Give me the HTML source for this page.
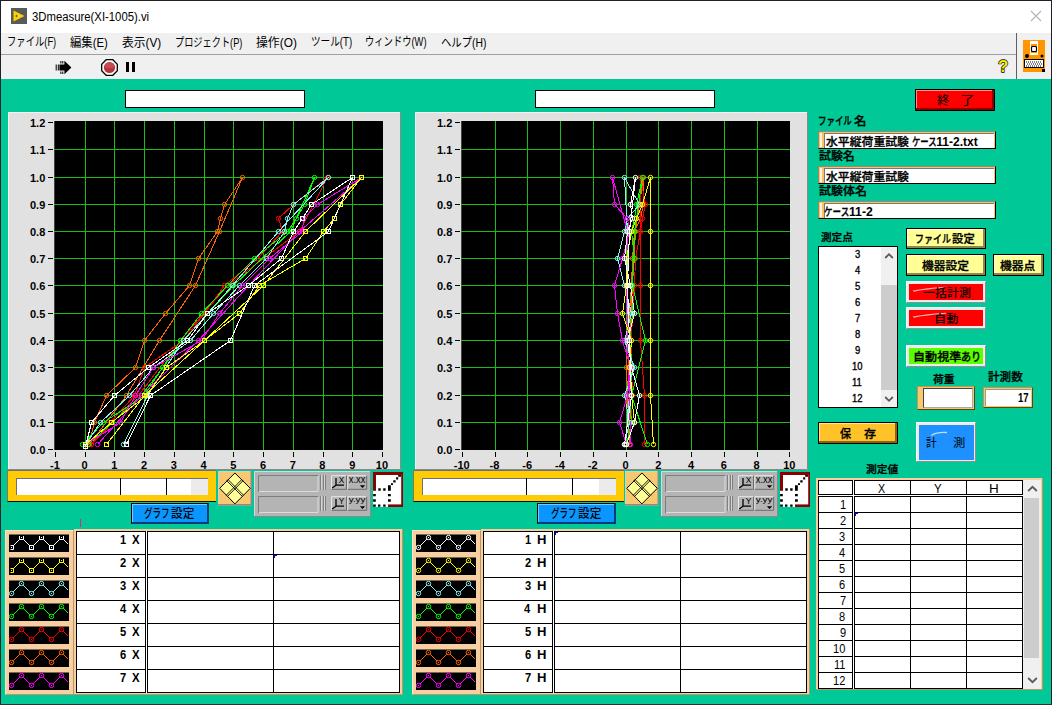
<!DOCTYPE html>
<html lang="ja"><head><meta charset="utf-8"><title>3Dmeasure(XI-1005).vi</title>
<style>
html,body{margin:0;padding:0}
body{width:1052px;height:705px;overflow:hidden;position:relative;background:#00c896;font-family:"Liberation Sans","Noto Sans CJK JP",sans-serif;color:#000}
body>*{position:absolute;box-sizing:border-box}
.t{white-space:nowrap;line-height:1}
svg text{font-family:"Liberation Sans","Noto Sans CJK JP",sans-serif}
.or{background:#f7c86e;border:1px solid;border-color:#c09848 #5a4410 #5a4410 #c09848}
.sv{background:#ececec;border:1px solid;border-color:#f8f8f8 #909090 #909090 #f8f8f8}
.pf{background:#f7cfa0;border-right:1px solid #b89868;border-bottom:1px solid #b89868}
.w{background:#fff}
.k{background:#000}
</style></head><body>

<div class="w" style="left:0;top:0;width:1052px;height:33px"></div>
<div style="left:0;top:33px;width:1052px;height:46px;background:#f0f0f0"></div>
<div style="left:0;top:54px;width:1017px;height:1px;background:#a0a0a0"></div>
<div style="left:1016px;top:33px;width:1px;height:46px;background:#606060"></div>
<svg style="left:11px;top:8px" width="16" height="16" viewBox="0 0 16 16"><rect width="16" height="16" fill="#5a5a5a"/><path d="M2.500 2.500L13.500 8L2.500 13.500Z" fill="#ffd200"/><path d="M5.500 6.800v2.400M4.300 8h2.400" stroke="#5a5a5a" stroke-width="0.900"/></svg>
<span class="t" style="left:31.9px;top:11.0px;font-size:12px;transform:scaleX(0.944);transform-origin:0 0;">3Dmeasure(XI-1005).vi</span>
<svg style="left:1030px;top:10px" width="12" height="12" viewBox="0 0 12 12"><path d="M1 1L11 11M11 1L1 11" stroke="#b4b4b4" stroke-width="1.100" fill="none"/></svg>
<span class="t" style="left:6.5px;top:36.0px;font-size:12px;transform:scaleX(0.777);transform-origin:0 0;">ファイル(F)</span>
<span class="t" style="left:70.2px;top:37.0px;font-size:12px;transform:scaleX(0.944);transform-origin:0 0;">編集(E)</span>
<span class="t" style="left:121.9px;top:37.0px;font-size:12px;transform:scaleX(0.981);transform-origin:0 0;">表示(V)</span>
<span class="t" style="left:174.5px;top:37.0px;font-size:12px;transform:scaleX(0.765);transform-origin:0 0;">プロジェクト(P)</span>
<span class="t" style="left:255.9px;top:37.0px;font-size:12px;transform:scaleX(0.988);transform-origin:0 0;">操作(O)</span>
<span class="t" style="left:310.8px;top:36.0px;font-size:12px;transform:scaleX(0.802);transform-origin:0 0;">ツール(T)</span>
<span class="t" style="left:365.1px;top:36.0px;font-size:12px;transform:scaleX(0.775);transform-origin:0 0;">ウィンドウ(W)</span>
<span class="t" style="left:441.0px;top:37.0px;font-size:12px;transform:scaleX(0.864);transform-origin:0 0;">ヘルプ(H)</span>
<svg style="left:55px;top:60px" width="17" height="15" viewBox="0 0 17 15"><path d="M4.400 4.500h5V0.800l7 6.700-7 6.700v-3.700h-5z" fill="#000"/><path d="M1.200 4.500v6M3.300 4.500v6M5.900 1v2.500M7.800 1v2.500M5.900 11.500v2.500M7.800 11.500v2.500" stroke="#000" stroke-width="1"/></svg>
<svg style="left:101px;top:59px" width="17" height="17" viewBox="0 0 17 17"><path d="M5.200 0.700h6.600l4.500 4.500v6.600l-4.500 4.500h-6.600l-4.500-4.500v-6.600z" fill="#fff" stroke="#000" stroke-width="1.300"/><circle cx="8.500" cy="8.500" r="5.600" fill="#b83238"/><ellipse cx="8.500" cy="6.500" rx="4.500" ry="3" fill="#cc5560" opacity="0.700"/></svg>
<div class="k" style="left:126px;top:62px;width:3px;height:10px"></div>
<div class="k" style="left:132px;top:62px;width:3px;height:10px"></div>
<svg style="left:994px;top:56px" width="18" height="20" viewBox="0 0 18 20"><text x="9.150" y="16" font-size="17" font-weight="bold" text-anchor="middle" fill="#f0f000" stroke="#000" stroke-width="1.300" paint-order="stroke" stroke-linejoin="round">?</text></svg>
<svg style="left:1023px;top:40px" width="22" height="32" viewBox="0 0 22 32"><rect width="22" height="32" fill="#ff9600"/><rect x="7" y="1" width="8" height="14" fill="#fff"/><rect x="8" y="4" width="6" height="9" fill="#ff9600"/><rect x="8.500" y="6.500" width="5" height="5" rx="1" fill="#fff" stroke="#000" stroke-width="1.200"/><circle cx="4" cy="16" r="2" fill="#000"/><circle cx="19" cy="16" r="1.500" fill="#000"/><rect x="1.500" y="19.500" width="19" height="8" fill="#fff" stroke="#000" stroke-width="1"/><path d="M3 22h16M3 26h16" stroke="#000" stroke-width="1" stroke-dasharray="1 1"/><path d="M4 24h15" stroke="#000" stroke-width="1" stroke-dasharray="1 1"/><rect x="19" y="29" width="3" height="3" fill="#000"/></svg>
<div style="left:0;top:0;width:1052px;height:1px;background:#20202c"></div>
<div style="left:0;top:0;width:1px;height:705px;background:#20202c"></div>
<div style="left:1051px;top:0;width:1px;height:705px;background:#20202c"></div>
<div style="left:0;top:703.500px;width:1052px;height:1.500px;background:#303038"></div>
<div class="w" style="left:125px;top:90px;width:180px;height:18px;border:1px solid #000"></div>
<div class="w" style="left:535px;top:90px;width:180px;height:18px;border:1px solid #000"></div>
<svg style="left:8px;top:112px" width="393" height="358" viewBox="0 0 393 358"><rect width="393" height="358" fill="#e1e1e1"/><path d="M0.500 358V0.500H393" fill="none" stroke="#f4f4f4" stroke-width="1"/><path d="M392.5 0V357.5H0" fill="none" stroke="#8a8a8a" stroke-width="1"/><rect x="46.3" y="9" width="328.7" height="329" fill="#000"/><path d="M77.5 9V338M106.5 9V338M136.5 9V338M166.5 9V338M196.5 9V338M225.5 9V338M255.5 9V338M285.5 9V338M315.5 9V338M344.5 9V338M46.3 310.5H375M46.3 283.5H375M46.3 255.5H375M46.3 228.5H375M46.3 201.5H375M46.3 173.5H375M46.3 146.5H375M46.3 119.5H375M46.3 92.5H375M46.3 65.5H375M46.3 37.5H375" stroke="#1cbc14" stroke-width="1" fill="none" shape-rendering="crispEdges"/><path d="M47.5 340v5M77.5 340v5M106.5 340v5M136.5 340v5M166.5 340v5M196.5 340v5M225.5 340v5M255.5 340v5M285.5 340v5M315.5 340v5M344.5 340v5M374.5 340v5M40.3 337.5h5M40.3 310.5h5M40.3 283.5h5M40.3 255.5h5M40.3 228.5h5M40.3 201.5h5M40.3 173.5h5M40.3 146.5h5M40.3 119.5h5M40.3 92.5h5M40.3 65.5h5M40.3 37.5h5M40.3 10.5h5" stroke="#000" stroke-width="1" fill="none" shape-rendering="crispEdges"/><g font-size="11" font-weight="bold" text-anchor="middle"><text x="46.9" y="356.6">-1</text><text x="76.6" y="356.6">0</text><text x="106.3" y="356.6">1</text><text x="136.1" y="356.6">2</text><text x="165.8" y="356.6">3</text><text x="195.5" y="356.6">4</text><text x="225.3" y="356.6">5</text><text x="255.0" y="356.6">6</text><text x="284.7" y="356.6">7</text><text x="314.4" y="356.6">8</text><text x="344.2" y="356.6">9</text><text x="373.9" y="356.6">10</text></g><g font-size="11" font-weight="bold" text-anchor="end"><text x="37.3" y="341.8">0.0</text><text x="37.3" y="314.8">0.1</text><text x="37.3" y="287.8">0.2</text><text x="37.3" y="259.8">0.3</text><text x="37.3" y="232.8">0.4</text><text x="37.3" y="205.8">0.5</text><text x="37.3" y="177.8">0.6</text><text x="37.3" y="150.8">0.7</text><text x="37.3" y="123.8">0.8</text><text x="37.3" y="96.8">0.9</text><text x="37.3" y="69.8">1.0</text><text x="37.3" y="41.8">1.1</text><text x="37.3" y="14.8">1.2</text></g><g fill="none" stroke="#ff6400" stroke-width="1"><polyline shape-rendering="crispEdges" points="80.5,332.5 86.5,310.5 98.5,283.5 127.5,255.5 136.5,228.5 157.5,201.5 181.5,173.5 190.5,146.5 209.5,119.5 212.5,106.5 216.5,92.5 234.5,65.5 211.5,119.5 187.5,173.5 151.5,228.5 118.5,283.5 81.5,332.5"/><circle cx="80.5" cy="332.5" r="2.200"/><circle cx="86.5" cy="310.5" r="2.200"/><circle cx="98.5" cy="283.5" r="2.200"/><circle cx="127.5" cy="255.5" r="2.200"/><circle cx="136.5" cy="228.5" r="2.200"/><circle cx="157.5" cy="201.5" r="2.200"/><circle cx="181.5" cy="173.5" r="2.200"/><circle cx="190.5" cy="146.5" r="2.200"/><circle cx="209.5" cy="119.5" r="2.200"/><circle cx="212.5" cy="106.5" r="2.200"/><circle cx="216.5" cy="92.5" r="2.200"/><circle cx="234.5" cy="65.5" r="2.200"/><circle cx="211.5" cy="119.5" r="2.200"/><circle cx="187.5" cy="173.5" r="2.200"/><circle cx="151.5" cy="228.5" r="2.200"/><circle cx="118.5" cy="283.5" r="2.200"/><circle cx="81.5" cy="332.5" r="2.200"/></g><g fill="none" stroke="#ff0000" stroke-width="1"><polyline shape-rendering="crispEdges" points="83.5,332.5 102.5,310.5 126.5,283.5 136.5,255.5 175.5,228.5 196.5,201.5 216.5,173.5 249.5,146.5 274.5,119.5 270.5,106.5 285.5,92.5 319.5,65.5 291.5,119.5 219.5,173.5 172.5,228.5 130.5,283.5 83.5,332.5"/><circle cx="83.5" cy="332.5" r="2.200"/><circle cx="102.5" cy="310.5" r="2.200"/><circle cx="126.5" cy="283.5" r="2.200"/><circle cx="136.5" cy="255.5" r="2.200"/><circle cx="175.5" cy="228.5" r="2.200"/><circle cx="196.5" cy="201.5" r="2.200"/><circle cx="216.5" cy="173.5" r="2.200"/><circle cx="249.5" cy="146.5" r="2.200"/><circle cx="274.5" cy="119.5" r="2.200"/><circle cx="270.5" cy="106.5" r="2.200"/><circle cx="285.5" cy="92.5" r="2.200"/><circle cx="319.5" cy="65.5" r="2.200"/><circle cx="291.5" cy="119.5" r="2.200"/><circle cx="219.5" cy="173.5" r="2.200"/><circle cx="172.5" cy="228.5" r="2.200"/><circle cx="130.5" cy="283.5" r="2.200"/><circle cx="83.5" cy="332.5" r="2.200"/></g><g fill="none" stroke="#00ff00" stroke-width="1"><polyline shape-rendering="crispEdges" points="74.5,332.5 95.5,310.5 136.5,283.5 154.5,255.5 172.5,228.5 193.5,201.5 219.5,173.5 246.5,146.5 279.5,119.5 288.5,106.5 296.5,92.5 306.5,65.5 282.5,119.5 225.5,173.5 175.5,228.5 133.5,283.5 80.5,332.5"/><circle cx="74.5" cy="332.5" r="2.200"/><circle cx="95.5" cy="310.5" r="2.200"/><circle cx="136.5" cy="283.5" r="2.200"/><circle cx="154.5" cy="255.5" r="2.200"/><circle cx="172.5" cy="228.5" r="2.200"/><circle cx="193.5" cy="201.5" r="2.200"/><circle cx="219.5" cy="173.5" r="2.200"/><circle cx="246.5" cy="146.5" r="2.200"/><circle cx="279.5" cy="119.5" r="2.200"/><circle cx="288.5" cy="106.5" r="2.200"/><circle cx="296.5" cy="92.5" r="2.200"/><circle cx="306.5" cy="65.5" r="2.200"/><circle cx="282.5" cy="119.5" r="2.200"/><circle cx="225.5" cy="173.5" r="2.200"/><circle cx="175.5" cy="228.5" r="2.200"/><circle cx="133.5" cy="283.5" r="2.200"/><circle cx="80.5" cy="332.5" r="2.200"/></g><g fill="none" stroke="#8cf0f0" stroke-width="1"><polyline shape-rendering="crispEdges" points="77.5,332.5 92.5,310.5 121.5,283.5 145.5,255.5 182.5,228.5 205.5,201.5 231.5,173.5 258.5,146.5 276.5,119.5 279.5,106.5 285.5,92.5 320.5,65.5 270.5,119.5 224.5,173.5 175.5,228.5 139.5,283.5 115.5,332.5"/><circle cx="77.5" cy="332.5" r="2.200"/><circle cx="92.5" cy="310.5" r="2.200"/><circle cx="121.5" cy="283.5" r="2.200"/><circle cx="145.5" cy="255.5" r="2.200"/><circle cx="182.5" cy="228.5" r="2.200"/><circle cx="205.5" cy="201.5" r="2.200"/><circle cx="231.5" cy="173.5" r="2.200"/><circle cx="258.5" cy="146.5" r="2.200"/><circle cx="276.5" cy="119.5" r="2.200"/><circle cx="279.5" cy="106.5" r="2.200"/><circle cx="285.5" cy="92.5" r="2.200"/><circle cx="320.5" cy="65.5" r="2.200"/><circle cx="270.5" cy="119.5" r="2.200"/><circle cx="224.5" cy="173.5" r="2.200"/><circle cx="175.5" cy="228.5" r="2.200"/><circle cx="139.5" cy="283.5" r="2.200"/><circle cx="115.5" cy="332.5" r="2.200"/></g><g fill="none" stroke="#ff00ff" stroke-width="1"><polyline shape-rendering="crispEdges" points="77.5,332.5 112.5,310.5 127.5,283.5 145.5,255.5 193.5,228.5 211.5,201.5 234.5,173.5 261.5,146.5 294.5,119.5 295.5,106.5 309.5,92.5 353.5,65.5 291.5,119.5 240.5,173.5 190.5,228.5 133.5,283.5 89.5,332.5"/><circle cx="77.5" cy="332.5" r="2.200"/><circle cx="112.5" cy="310.5" r="2.200"/><circle cx="127.5" cy="283.5" r="2.200"/><circle cx="145.5" cy="255.5" r="2.200"/><circle cx="193.5" cy="228.5" r="2.200"/><circle cx="211.5" cy="201.5" r="2.200"/><circle cx="234.5" cy="173.5" r="2.200"/><circle cx="261.5" cy="146.5" r="2.200"/><circle cx="294.5" cy="119.5" r="2.200"/><circle cx="295.5" cy="106.5" r="2.200"/><circle cx="309.5" cy="92.5" r="2.200"/><circle cx="353.5" cy="65.5" r="2.200"/><circle cx="291.5" cy="119.5" r="2.200"/><circle cx="240.5" cy="173.5" r="2.200"/><circle cx="190.5" cy="228.5" r="2.200"/><circle cx="133.5" cy="283.5" r="2.200"/><circle cx="89.5" cy="332.5" r="2.200"/></g><g fill="none" stroke="#ffff00" stroke-width="1"><polyline shape-rendering="crispEdges" points="77.5,332.5 103.5,310.5 138.5,283.5 158.5,255.5 196.5,228.5 231.5,201.5 251.5,173.5 297.5,146.5 315.5,119.5 326.5,106.5 332.5,92.5 353.5,65.5 297.5,119.5 255.5,173.5 196.5,228.5 136.5,283.5 98.5,332.5"/><rect x="75.5" y="330.5" width="4" height="4"/><rect x="101.5" y="308.5" width="4" height="4"/><rect x="136.5" y="281.5" width="4" height="4"/><rect x="156.5" y="253.5" width="4" height="4"/><rect x="194.5" y="226.5" width="4" height="4"/><rect x="229.5" y="199.5" width="4" height="4"/><rect x="249.5" y="171.5" width="4" height="4"/><rect x="295.5" y="144.5" width="4" height="4"/><rect x="313.5" y="117.5" width="4" height="4"/><rect x="324.5" y="104.5" width="4" height="4"/><rect x="330.5" y="90.5" width="4" height="4"/><rect x="351.5" y="63.5" width="4" height="4"/><rect x="295.5" y="117.5" width="4" height="4"/><rect x="253.5" y="171.5" width="4" height="4"/><rect x="194.5" y="226.5" width="4" height="4"/><rect x="134.5" y="281.5" width="4" height="4"/><rect x="96.5" y="330.5" width="4" height="4"/></g><g fill="none" stroke="#ffffff" stroke-width="1"><polyline shape-rendering="crispEdges" points="77.5,334.5 83.5,310.5 106.5,283.5 140.5,255.5 179.5,228.5 199.5,201.5 240.5,173.5 273.5,146.5 285.5,119.5 294.5,106.5 303.5,92.5 344.5,65.5 320.5,119.5 246.5,173.5 222.5,228.5 142.5,283.5 118.5,332.5"/><rect x="75.5" y="332.5" width="4" height="4"/><rect x="81.5" y="308.5" width="4" height="4"/><rect x="104.5" y="281.5" width="4" height="4"/><rect x="138.5" y="253.5" width="4" height="4"/><rect x="177.5" y="226.5" width="4" height="4"/><rect x="197.5" y="199.5" width="4" height="4"/><rect x="238.5" y="171.5" width="4" height="4"/><rect x="271.5" y="144.5" width="4" height="4"/><rect x="283.5" y="117.5" width="4" height="4"/><rect x="292.5" y="104.5" width="4" height="4"/><rect x="301.5" y="90.5" width="4" height="4"/><rect x="342.5" y="63.5" width="4" height="4"/><rect x="318.5" y="117.5" width="4" height="4"/><rect x="244.5" y="171.5" width="4" height="4"/><rect x="220.5" y="226.5" width="4" height="4"/><rect x="140.5" y="281.5" width="4" height="4"/><rect x="116.5" y="330.5" width="4" height="4"/></g></svg>
<svg style="left:415px;top:112px" width="393" height="358" viewBox="0 0 393 358"><rect width="393" height="358" fill="#e1e1e1"/><path d="M0.500 358V0.500H393" fill="none" stroke="#f4f4f4" stroke-width="1"/><path d="M392.5 0V357.5H0" fill="none" stroke="#8a8a8a" stroke-width="1"/><rect x="46.3" y="9" width="328.7" height="329" fill="#000"/><path d="M80.5 9V338M112.5 9V338M145.5 9V338M178.5 9V338M211.5 9V338M243.5 9V338M276.5 9V338M309.5 9V338M342.5 9V338M46.3 310.5H375M46.3 283.5H375M46.3 255.5H375M46.3 228.5H375M46.3 201.5H375M46.3 173.5H375M46.3 146.5H375M46.3 119.5H375M46.3 92.5H375M46.3 65.5H375M46.3 37.5H375" stroke="#1cbc14" stroke-width="1" fill="none" shape-rendering="crispEdges"/><path d="M47.5 340v5M80.5 340v5M112.5 340v5M145.5 340v5M178.5 340v5M211.5 340v5M243.5 340v5M276.5 340v5M309.5 340v5M342.5 340v5M374.5 340v5M40.3 337.5h5M40.3 310.5h5M40.3 283.5h5M40.3 255.5h5M40.3 228.5h5M40.3 201.5h5M40.3 173.5h5M40.3 146.5h5M40.3 119.5h5M40.3 92.5h5M40.3 65.5h5M40.3 37.5h5M40.3 10.5h5" stroke="#000" stroke-width="1" fill="none" shape-rendering="crispEdges"/><g font-size="11" font-weight="bold" text-anchor="middle"><text x="46.7" y="356.6">-10</text><text x="79.5" y="356.6">-8</text><text x="112.2" y="356.6">-6</text><text x="145.0" y="356.6">-4</text><text x="177.7" y="356.6">-2</text><text x="210.5" y="356.6">0</text><text x="243.3" y="356.6">2</text><text x="276.0" y="356.6">4</text><text x="308.8" y="356.6">6</text><text x="341.5" y="356.6">8</text><text x="374.3" y="356.6">10</text></g><g font-size="11" font-weight="bold" text-anchor="end"><text x="37.3" y="341.8">0.0</text><text x="37.3" y="314.8">0.1</text><text x="37.3" y="287.8">0.2</text><text x="37.3" y="259.8">0.3</text><text x="37.3" y="232.8">0.4</text><text x="37.3" y="205.8">0.5</text><text x="37.3" y="177.8">0.6</text><text x="37.3" y="150.8">0.7</text><text x="37.3" y="123.8">0.8</text><text x="37.3" y="96.8">0.9</text><text x="37.3" y="69.8">1.0</text><text x="37.3" y="41.8">1.1</text><text x="37.3" y="14.8">1.2</text></g><g fill="none" stroke="#ff6400" stroke-width="1"><polyline shape-rendering="crispEdges" points="211.5,332.5 216.5,310.5 212.5,283.5 211.5,255.5 212.5,228.5 214.5,201.5 216.5,173.5 217.5,146.5 219.5,119.5 225.5,106.5 228.5,92.5 228.5,65.5 220.5,119.5 217.5,173.5 214.5,228.5 212.5,283.5 214.5,332.5"/><circle cx="211.5" cy="332.5" r="2.200"/><circle cx="216.5" cy="310.5" r="2.200"/><circle cx="212.5" cy="283.5" r="2.200"/><circle cx="211.5" cy="255.5" r="2.200"/><circle cx="212.5" cy="228.5" r="2.200"/><circle cx="214.5" cy="201.5" r="2.200"/><circle cx="216.5" cy="173.5" r="2.200"/><circle cx="217.5" cy="146.5" r="2.200"/><circle cx="219.5" cy="119.5" r="2.200"/><circle cx="225.5" cy="106.5" r="2.200"/><circle cx="228.5" cy="92.5" r="2.200"/><circle cx="228.5" cy="65.5" r="2.200"/><circle cx="220.5" cy="119.5" r="2.200"/><circle cx="217.5" cy="173.5" r="2.200"/><circle cx="214.5" cy="228.5" r="2.200"/><circle cx="212.5" cy="283.5" r="2.200"/><circle cx="214.5" cy="332.5" r="2.200"/></g><g fill="none" stroke="#ff0000" stroke-width="1"><polyline shape-rendering="crispEdges" points="211.5,332.5 216.5,310.5 217.5,283.5 216.5,255.5 216.5,228.5 217.5,201.5 219.5,173.5 220.5,146.5 225.5,119.5 227.5,106.5 230.5,92.5 225.5,65.5 225.5,119.5 225.5,173.5 225.5,228.5 229.5,283.5 229.5,332.5"/><circle cx="211.5" cy="332.5" r="2.200"/><circle cx="216.5" cy="310.5" r="2.200"/><circle cx="217.5" cy="283.5" r="2.200"/><circle cx="216.5" cy="255.5" r="2.200"/><circle cx="216.5" cy="228.5" r="2.200"/><circle cx="217.5" cy="201.5" r="2.200"/><circle cx="219.5" cy="173.5" r="2.200"/><circle cx="220.5" cy="146.5" r="2.200"/><circle cx="225.5" cy="119.5" r="2.200"/><circle cx="227.5" cy="106.5" r="2.200"/><circle cx="230.5" cy="92.5" r="2.200"/><circle cx="225.5" cy="65.5" r="2.200"/><circle cx="225.5" cy="119.5" r="2.200"/><circle cx="225.5" cy="173.5" r="2.200"/><circle cx="225.5" cy="228.5" r="2.200"/><circle cx="229.5" cy="283.5" r="2.200"/><circle cx="229.5" cy="332.5" r="2.200"/></g><g fill="none" stroke="#00ff00" stroke-width="1"><polyline shape-rendering="crispEdges" points="211.5,332.5 216.5,310.5 214.5,283.5 217.5,255.5 214.5,228.5 217.5,201.5 216.5,173.5 219.5,146.5 216.5,119.5 219.5,106.5 221.5,92.5 227.5,65.5 219.5,119.5 217.5,173.5 230.5,228.5 216.5,283.5 232.5,332.5"/><circle cx="211.5" cy="332.5" r="2.200"/><circle cx="216.5" cy="310.5" r="2.200"/><circle cx="214.5" cy="283.5" r="2.200"/><circle cx="217.5" cy="255.5" r="2.200"/><circle cx="214.5" cy="228.5" r="2.200"/><circle cx="217.5" cy="201.5" r="2.200"/><circle cx="216.5" cy="173.5" r="2.200"/><circle cx="219.5" cy="146.5" r="2.200"/><circle cx="216.5" cy="119.5" r="2.200"/><circle cx="219.5" cy="106.5" r="2.200"/><circle cx="221.5" cy="92.5" r="2.200"/><circle cx="227.5" cy="65.5" r="2.200"/><circle cx="219.5" cy="119.5" r="2.200"/><circle cx="217.5" cy="173.5" r="2.200"/><circle cx="230.5" cy="228.5" r="2.200"/><circle cx="216.5" cy="283.5" r="2.200"/><circle cx="232.5" cy="332.5" r="2.200"/></g><g fill="none" stroke="#8cf0f0" stroke-width="1"><polyline shape-rendering="crispEdges" points="209.5,332.5 214.5,310.5 209.5,283.5 219.5,255.5 209.5,228.5 216.5,201.5 209.5,173.5 202.5,146.5 209.5,119.5 212.5,106.5 224.5,92.5 209.5,65.5 212.5,119.5 212.5,173.5 212.5,228.5 214.5,283.5 210.5,332.5"/><circle cx="209.5" cy="332.5" r="2.200"/><circle cx="214.5" cy="310.5" r="2.200"/><circle cx="209.5" cy="283.5" r="2.200"/><circle cx="219.5" cy="255.5" r="2.200"/><circle cx="209.5" cy="228.5" r="2.200"/><circle cx="216.5" cy="201.5" r="2.200"/><circle cx="209.5" cy="173.5" r="2.200"/><circle cx="202.5" cy="146.5" r="2.200"/><circle cx="209.5" cy="119.5" r="2.200"/><circle cx="212.5" cy="106.5" r="2.200"/><circle cx="224.5" cy="92.5" r="2.200"/><circle cx="209.5" cy="65.5" r="2.200"/><circle cx="212.5" cy="119.5" r="2.200"/><circle cx="212.5" cy="173.5" r="2.200"/><circle cx="212.5" cy="228.5" r="2.200"/><circle cx="214.5" cy="283.5" r="2.200"/><circle cx="210.5" cy="332.5" r="2.200"/></g><g fill="none" stroke="#ff00ff" stroke-width="1"><polyline shape-rendering="crispEdges" points="211.5,332.5 204.5,310.5 212.5,283.5 215.5,255.5 207.5,228.5 202.5,201.5 199.5,173.5 207.5,146.5 214.5,119.5 212.5,106.5 199.5,92.5 197.5,65.5 212.5,119.5 211.5,173.5 212.5,228.5 214.5,283.5 215.5,332.5"/><circle cx="211.5" cy="332.5" r="2.200"/><circle cx="204.5" cy="310.5" r="2.200"/><circle cx="212.5" cy="283.5" r="2.200"/><circle cx="215.5" cy="255.5" r="2.200"/><circle cx="207.5" cy="228.5" r="2.200"/><circle cx="202.5" cy="201.5" r="2.200"/><circle cx="199.5" cy="173.5" r="2.200"/><circle cx="207.5" cy="146.5" r="2.200"/><circle cx="214.5" cy="119.5" r="2.200"/><circle cx="212.5" cy="106.5" r="2.200"/><circle cx="199.5" cy="92.5" r="2.200"/><circle cx="197.5" cy="65.5" r="2.200"/><circle cx="212.5" cy="119.5" r="2.200"/><circle cx="211.5" cy="173.5" r="2.200"/><circle cx="212.5" cy="228.5" r="2.200"/><circle cx="214.5" cy="283.5" r="2.200"/><circle cx="215.5" cy="332.5" r="2.200"/></g><g fill="none" stroke="#ffff00" stroke-width="1"><polyline shape-rendering="crispEdges" points="211.5,332.5 219.5,310.5 216.5,283.5 214.5,255.5 216.5,228.5 207.5,201.5 211.5,173.5 211.5,146.5 216.5,119.5 221.5,106.5 227.5,92.5 235.5,65.5 235.5,119.5 235.5,173.5 235.5,228.5 235.5,283.5 238.5,332.5"/><circle cx="211.5" cy="332.5" r="2.200"/><circle cx="219.5" cy="310.5" r="2.200"/><circle cx="216.5" cy="283.5" r="2.200"/><circle cx="214.5" cy="255.5" r="2.200"/><circle cx="216.5" cy="228.5" r="2.200"/><circle cx="207.5" cy="201.5" r="2.200"/><circle cx="211.5" cy="173.5" r="2.200"/><circle cx="211.5" cy="146.5" r="2.200"/><circle cx="216.5" cy="119.5" r="2.200"/><circle cx="221.5" cy="106.5" r="2.200"/><circle cx="227.5" cy="92.5" r="2.200"/><circle cx="235.5" cy="65.5" r="2.200"/><circle cx="235.5" cy="119.5" r="2.200"/><circle cx="235.5" cy="173.5" r="2.200"/><circle cx="235.5" cy="228.5" r="2.200"/><circle cx="235.5" cy="283.5" r="2.200"/><circle cx="238.5" cy="332.5" r="2.200"/></g><g fill="none" stroke="#ffffff" stroke-width="1"><polyline shape-rendering="crispEdges" points="211.5,332.5 219.5,310.5 224.5,283.5 216.5,255.5 212.5,228.5 219.5,201.5 215.5,173.5 209.5,146.5 212.5,119.5 217.5,106.5 215.5,92.5 220.5,65.5 214.5,119.5 212.5,173.5 214.5,228.5 216.5,283.5 209.5,332.5"/><circle cx="211.5" cy="332.5" r="2.200"/><circle cx="219.5" cy="310.5" r="2.200"/><circle cx="224.5" cy="283.5" r="2.200"/><circle cx="216.5" cy="255.5" r="2.200"/><circle cx="212.5" cy="228.5" r="2.200"/><circle cx="219.5" cy="201.5" r="2.200"/><circle cx="215.5" cy="173.5" r="2.200"/><circle cx="209.5" cy="146.5" r="2.200"/><circle cx="212.5" cy="119.5" r="2.200"/><circle cx="217.5" cy="106.5" r="2.200"/><circle cx="215.5" cy="92.5" r="2.200"/><circle cx="220.5" cy="65.5" r="2.200"/><circle cx="214.5" cy="119.5" r="2.200"/><circle cx="212.5" cy="173.5" r="2.200"/><circle cx="214.5" cy="228.5" r="2.200"/><circle cx="216.5" cy="283.5" r="2.200"/><circle cx="209.5" cy="332.5" r="2.200"/></g></svg>
<div style="left:7.4px;top:470px;width:208.6px;height:32px;background:#ffcb05;border-top:1px solid #70706c;border-left:1px solid #8a7a40;border-bottom:1px solid #101010"></div>
<div class="w" style="left:16.3px;top:477.500px;width:191.6px;height:17.200px;border-top:1px solid #707070;border-left:1px solid #707070"></div>
<div style="left:191.0px;top:478.500px;width:16.9px;height:16.200px;background:#ebebeb"></div>
<div class="k" style="left:120px;top:478px;width:1px;height:17px"></div>
<div class="k" style="left:166px;top:478px;width:1px;height:17px"></div>
<div style="left:131px;top:503px;width:78px;height:21px;background:#0a96ff;border:1px solid #000;border-right:2px solid #003c78;border-bottom:2px solid #003c78;box-shadow:inset 1px 1px 0 #7fc8ff"></div>
<span class="t" style="left:144.2px;top:508.0px;font-size:12px;font-weight:500;transform:scaleX(0.711);transform-origin:0 0;">グラフ</span>
<span class="t" style="left:170.8px;top:508.0px;font-size:12px;font-weight:500;transform:scaleX(0.970);transform-origin:0 0;">設定</span>
<svg style="left:217.5px;top:471px" width="34" height="34.500" viewBox="0 0 34 34.500"><rect width="34" height="34.500" fill="#f8c870"/><path d="M0.500 34.500V0.500H34" stroke="#d8d0c0" stroke-width="1" fill="none"/><path d="M33.250 0V33.750H0" stroke="#8c8c8c" stroke-width="1.500" fill="none"/><path d="M16.900 2L32.300 17.300L16.900 32.900L1.700 17.300Z" fill="#ffff96" stroke="#000" stroke-width="1"/><path d="M8.700 9.600L24.300 25.400M9.900 8.400L25.500 24.200M25.100 9.600L9.500 25.400M23.900 8.400L8.300 24.200" stroke="#000" stroke-width="0.900" fill="none"/></svg>
<svg style="left:254px;top:471px" width="117" height="46" viewBox="0 0 117 46"><rect width="117" height="46" fill="#b4b4b4"/><path d="M0.500 46V0.500H117" stroke="#d8d8d8" fill="none"/><path d="M116.500 0V45.500H0" stroke="#8a8a8a" fill="none"/><path d="M4.500 21V4.5H64" stroke="#7c7c7c" fill="none"/><path d="M64 5V20.5H5" stroke="#dcdcdc" fill="none"/><path d="M66.500 4v15M69.500 4v15M71.500 4v15" stroke="#808080" fill="none"/><path d="M67.500 4v15M70.500 4v15" stroke="#d4d4d4" fill="none"/><path d="M77.5 18.3V4.7H92.5" stroke="#e8e8e8" fill="none"/><path d="M92.5 4.7V18.3H77.5" stroke="#6c6c6c" fill="none"/><path d="M93.8 18.3V4.7H112.69999999999999" stroke="#e8e8e8" fill="none"/><path d="M112.69999999999999 4.7V18.3H93.8" stroke="#6c6c6c" fill="none"/><path d="M82 7V14.2H90M82 14.2L78.200 17" stroke="#000" stroke-width="1.300" fill="none"/><text x="84.800" y="11.5" font-size="8.500" textLength="5.600" lengthAdjust="spacingAndGlyphs">X</text><text x="94.700" y="11.6" font-size="10" font-family="Liberation Mono,monospace" textLength="16.800" lengthAdjust="spacingAndGlyphs">x.xx</text><path d="M105.800 14.3h5.400l-2.700 2.700z" fill="#000"/><path d="M4.500 42V25.5H64" stroke="#7c7c7c" fill="none"/><path d="M64 26V41.5H5" stroke="#dcdcdc" fill="none"/><path d="M66.500 25v15M69.500 25v15M71.500 25v15" stroke="#808080" fill="none"/><path d="M67.500 25v15M70.500 25v15" stroke="#d4d4d4" fill="none"/><path d="M77.5 39.3V25.7H92.5" stroke="#e8e8e8" fill="none"/><path d="M92.5 25.7V39.3H77.5" stroke="#6c6c6c" fill="none"/><path d="M93.8 39.3V25.7H112.69999999999999" stroke="#e8e8e8" fill="none"/><path d="M112.69999999999999 25.7V39.3H93.8" stroke="#6c6c6c" fill="none"/><path d="M82 28V35.2H90M82 35.2L78.200 38" stroke="#000" stroke-width="1.300" fill="none"/><text x="84.800" y="32.5" font-size="8.500" textLength="5.600" lengthAdjust="spacingAndGlyphs">Y</text><text x="94.700" y="31.2" font-size="8" font-family="Liberation Mono,monospace" textLength="16.800" lengthAdjust="spacingAndGlyphs">y.yy</text><path d="M105.800 35.3h5.400l-2.700 2.700z" fill="#000"/></svg>
<svg style="left:373px;top:472px" width="30" height="35" viewBox="0 0 30 35"><rect width="30" height="35" fill="#8b0000"/><rect x="3" y="3" width="25.200" height="29.400" fill="#fff"/><rect x="0" y="18.800" width="15" height="16.200" fill="#fff"/><path d="M5.3 16.3h2.4v2.4h-2.4zM10.2 16.3h2.4v2.4h-2.4zM0.1 21.9h2.7v2.4h-2.7zM0.1 27.3h2.7v2.4h-2.7zM0.1 32.4h2.7v2.4h-2.7zM5.0 32.4h2.4v2.4h-2.4zM10.2 32.4h2.4v2.4h-2.4zM15.0 13.3h2.8v5.4h-2.8zM15.0 21.9h2.8v2.4h-2.8zM15.0 27.3h2.8v2.4h-2.8zM18.0 11.2h2v1.8h-2zM20.3 8.2h2.3v2.2h-2.3zM23.1 5.3h2.1v2.1h-2.1zM25.2 3.0h2.8v1.8h-2.8z" fill="#000"/></svg>
<div style="left:413.4px;top:470px;width:210.4px;height:32px;background:#ffcb05;border-top:1px solid #70706c;border-left:1px solid #8a7a40;border-bottom:1px solid #101010"></div>
<div class="w" style="left:422.3px;top:477.500px;width:193.5px;height:17.200px;border-top:1px solid #707070;border-left:1px solid #707070"></div>
<div style="left:598.8px;top:478.500px;width:17.0px;height:16.200px;background:#ebebeb"></div>
<div class="k" style="left:526px;top:478px;width:1px;height:17px"></div>
<div class="k" style="left:572px;top:478px;width:1px;height:17px"></div>
<div style="left:537px;top:503px;width:79px;height:21px;background:#0a96ff;border:1px solid #000;border-right:2px solid #003c78;border-bottom:2px solid #003c78;box-shadow:inset 1px 1px 0 #7fc8ff"></div>
<span class="t" style="left:551.0px;top:508.0px;font-size:12px;font-weight:500;transform:scaleX(0.711);transform-origin:0 0;">グラフ</span>
<span class="t" style="left:577.6px;top:508.0px;font-size:12px;font-weight:500;transform:scaleX(0.970);transform-origin:0 0;">設定</span>
<svg style="left:624.5px;top:471px" width="34" height="34.500" viewBox="0 0 34 34.500"><rect width="34" height="34.500" fill="#f8c870"/><path d="M0.500 34.500V0.500H34" stroke="#d8d0c0" stroke-width="1" fill="none"/><path d="M33.250 0V33.750H0" stroke="#8c8c8c" stroke-width="1.500" fill="none"/><path d="M16.900 2L32.300 17.300L16.900 32.900L1.700 17.300Z" fill="#ffff96" stroke="#000" stroke-width="1"/><path d="M8.700 9.600L24.300 25.400M9.900 8.400L25.500 24.200M25.100 9.600L9.500 25.400M23.900 8.400L8.300 24.200" stroke="#000" stroke-width="0.900" fill="none"/></svg>
<svg style="left:661px;top:471px" width="117" height="46" viewBox="0 0 117 46"><rect width="117" height="46" fill="#b4b4b4"/><path d="M0.500 46V0.500H117" stroke="#d8d8d8" fill="none"/><path d="M116.500 0V45.500H0" stroke="#8a8a8a" fill="none"/><path d="M4.500 21V4.5H64" stroke="#7c7c7c" fill="none"/><path d="M64 5V20.5H5" stroke="#dcdcdc" fill="none"/><path d="M66.500 4v15M69.500 4v15M71.500 4v15" stroke="#808080" fill="none"/><path d="M67.500 4v15M70.500 4v15" stroke="#d4d4d4" fill="none"/><path d="M77.5 18.3V4.7H92.5" stroke="#e8e8e8" fill="none"/><path d="M92.5 4.7V18.3H77.5" stroke="#6c6c6c" fill="none"/><path d="M93.8 18.3V4.7H112.69999999999999" stroke="#e8e8e8" fill="none"/><path d="M112.69999999999999 4.7V18.3H93.8" stroke="#6c6c6c" fill="none"/><path d="M82 7V14.2H90M82 14.2L78.200 17" stroke="#000" stroke-width="1.300" fill="none"/><text x="84.800" y="11.5" font-size="8.500" textLength="5.600" lengthAdjust="spacingAndGlyphs">X</text><text x="94.700" y="11.6" font-size="10" font-family="Liberation Mono,monospace" textLength="16.800" lengthAdjust="spacingAndGlyphs">x.xx</text><path d="M105.800 14.3h5.400l-2.700 2.700z" fill="#000"/><path d="M4.500 42V25.5H64" stroke="#7c7c7c" fill="none"/><path d="M64 26V41.5H5" stroke="#dcdcdc" fill="none"/><path d="M66.500 25v15M69.500 25v15M71.500 25v15" stroke="#808080" fill="none"/><path d="M67.500 25v15M70.500 25v15" stroke="#d4d4d4" fill="none"/><path d="M77.5 39.3V25.7H92.5" stroke="#e8e8e8" fill="none"/><path d="M92.5 25.7V39.3H77.5" stroke="#6c6c6c" fill="none"/><path d="M93.8 39.3V25.7H112.69999999999999" stroke="#e8e8e8" fill="none"/><path d="M112.69999999999999 25.7V39.3H93.8" stroke="#6c6c6c" fill="none"/><path d="M82 28V35.2H90M82 35.2L78.200 38" stroke="#000" stroke-width="1.300" fill="none"/><text x="84.800" y="32.5" font-size="8.500" textLength="5.600" lengthAdjust="spacingAndGlyphs">Y</text><text x="94.700" y="31.2" font-size="8" font-family="Liberation Mono,monospace" textLength="16.800" lengthAdjust="spacingAndGlyphs">y.yy</text><path d="M105.800 35.3h5.400l-2.700 2.700z" fill="#000"/></svg>
<svg style="left:780px;top:472px" width="30" height="35" viewBox="0 0 30 35"><rect width="30" height="35" fill="#8b0000"/><rect x="3" y="3" width="25.200" height="29.400" fill="#fff"/><rect x="0" y="18.800" width="15" height="16.200" fill="#fff"/><path d="M5.3 16.3h2.4v2.4h-2.4zM10.2 16.3h2.4v2.4h-2.4zM0.1 21.9h2.7v2.4h-2.7zM0.1 27.3h2.7v2.4h-2.7zM0.1 32.4h2.7v2.4h-2.7zM5.0 32.4h2.4v2.4h-2.4zM10.2 32.4h2.4v2.4h-2.4zM15.0 13.3h2.8v5.4h-2.8zM15.0 21.9h2.8v2.4h-2.8zM15.0 27.3h2.8v2.4h-2.8zM18.0 11.2h2v1.8h-2zM20.3 8.2h2.3v2.2h-2.3zM23.1 5.3h2.1v2.1h-2.1zM25.2 3.0h2.8v1.8h-2.8z" fill="#000"/></svg>
<div style="left:80px;top:519px;width:1px;height:8px;background:#e8246c"></div>
<div class="pf" style="left:5px;top:530px;width:69px;height:165px;border-top:1px solid #fbe4c4;border-left:1px solid #fbe4c4"></div>
<svg style="left:9px;top:534px" width="60" height="18" viewBox="0 0 60 18"><rect y="0.500" width="60" height="17.500" fill="#000"/><g fill="#000" stroke="#ffffff"><polyline fill="none" points="2.5,13.5 12.5,3.5 22.5,13.5 32.5,3.5 42.5,13.5 52.5,3.5 59,10"/><path d="M1.500 11.5H4.5V15.5H1.500"/><rect x="2.0" y="13.0" width="1" height="1" fill="#ffffff" stroke="none"/><path d="M10.5 2V5.5H14.5V2"/><rect x="12.0" y="3.0" width="1" height="1" fill="#ffffff" stroke="none"/><rect x="20.5" y="11.5" width="4" height="4"/><rect x="22.0" y="13.0" width="1" height="1" fill="#ffffff" stroke="none"/><path d="M30.5 2V5.5H34.5V2"/><rect x="32.0" y="3.0" width="1" height="1" fill="#ffffff" stroke="none"/><rect x="40.5" y="11.5" width="4" height="4"/><rect x="42.0" y="13.0" width="1" height="1" fill="#ffffff" stroke="none"/><path d="M50.5 2V5.5H54.5V2"/><rect x="52.0" y="3.0" width="1" height="1" fill="#ffffff" stroke="none"/></g></svg>
<svg style="left:9px;top:557px" width="60" height="18" viewBox="0 0 60 18"><rect y="0.500" width="60" height="17.500" fill="#000"/><g fill="#000" stroke="#ffff00"><polyline fill="none" points="2.5,13.5 12.5,3.5 22.5,13.5 32.5,3.5 42.5,13.5 52.5,3.5 59,10"/><path d="M1.500 11.5H4.5V15.5H1.500"/><rect x="2.0" y="13.0" width="1" height="1" fill="#ffff00" stroke="none"/><path d="M10.5 2V5.5H14.5V2"/><rect x="12.0" y="3.0" width="1" height="1" fill="#ffff00" stroke="none"/><rect x="20.5" y="11.5" width="4" height="4"/><rect x="22.0" y="13.0" width="1" height="1" fill="#ffff00" stroke="none"/><path d="M30.5 2V5.5H34.5V2"/><rect x="32.0" y="3.0" width="1" height="1" fill="#ffff00" stroke="none"/><rect x="40.5" y="11.5" width="4" height="4"/><rect x="42.0" y="13.0" width="1" height="1" fill="#ffff00" stroke="none"/><path d="M50.5 2V5.5H54.5V2"/><rect x="52.0" y="3.0" width="1" height="1" fill="#ffff00" stroke="none"/></g></svg>
<svg style="left:9px;top:580px" width="60" height="18" viewBox="0 0 60 18"><rect y="0.500" width="60" height="17.500" fill="#000"/><g fill="#000" stroke="#8cf0f0"><polyline fill="none" points="2.5,13.5 12.5,3.5 22.5,13.5 32.5,3.5 42.5,13.5 52.5,3.5 59,10"/><circle cx="2.5" cy="13.5" r="2.200"/><rect x="2.0" y="13.0" width="1" height="1" fill="#8cf0f0" stroke="none"/><circle cx="12.5" cy="3.5" r="2.200"/><rect x="12.0" y="3.0" width="1" height="1" fill="#8cf0f0" stroke="none"/><circle cx="22.5" cy="13.5" r="2.200"/><rect x="22.0" y="13.0" width="1" height="1" fill="#8cf0f0" stroke="none"/><circle cx="32.5" cy="3.5" r="2.200"/><rect x="32.0" y="3.0" width="1" height="1" fill="#8cf0f0" stroke="none"/><circle cx="42.5" cy="13.5" r="2.200"/><rect x="42.0" y="13.0" width="1" height="1" fill="#8cf0f0" stroke="none"/><circle cx="52.5" cy="3.5" r="2.200"/><rect x="52.0" y="3.0" width="1" height="1" fill="#8cf0f0" stroke="none"/></g></svg>
<svg style="left:9px;top:603px" width="60" height="18" viewBox="0 0 60 18"><rect y="0.500" width="60" height="17.500" fill="#000"/><g fill="#000" stroke="#00ff00"><polyline fill="none" points="2.5,13.5 12.5,3.5 22.5,13.5 32.5,3.5 42.5,13.5 52.5,3.5 59,10"/><circle cx="2.5" cy="13.5" r="2.200"/><rect x="2.0" y="13.0" width="1" height="1" fill="#00ff00" stroke="none"/><circle cx="12.5" cy="3.5" r="2.200"/><rect x="12.0" y="3.0" width="1" height="1" fill="#00ff00" stroke="none"/><circle cx="22.5" cy="13.5" r="2.200"/><rect x="22.0" y="13.0" width="1" height="1" fill="#00ff00" stroke="none"/><circle cx="32.5" cy="3.5" r="2.200"/><rect x="32.0" y="3.0" width="1" height="1" fill="#00ff00" stroke="none"/><circle cx="42.5" cy="13.5" r="2.200"/><rect x="42.0" y="13.0" width="1" height="1" fill="#00ff00" stroke="none"/><circle cx="52.5" cy="3.5" r="2.200"/><rect x="52.0" y="3.0" width="1" height="1" fill="#00ff00" stroke="none"/></g></svg>
<svg style="left:9px;top:626px" width="60" height="18" viewBox="0 0 60 18"><rect y="0.500" width="60" height="17.500" fill="#000"/><g fill="#000" stroke="#ff0000"><polyline fill="none" points="2.5,13.5 12.5,3.5 22.5,13.5 32.5,3.5 42.5,13.5 52.5,3.5 59,10"/><circle cx="2.5" cy="13.5" r="2.200"/><rect x="2.0" y="13.0" width="1" height="1" fill="#ff0000" stroke="none"/><circle cx="12.5" cy="3.5" r="2.200"/><rect x="12.0" y="3.0" width="1" height="1" fill="#ff0000" stroke="none"/><circle cx="22.5" cy="13.5" r="2.200"/><rect x="22.0" y="13.0" width="1" height="1" fill="#ff0000" stroke="none"/><circle cx="32.5" cy="3.5" r="2.200"/><rect x="32.0" y="3.0" width="1" height="1" fill="#ff0000" stroke="none"/><circle cx="42.5" cy="13.5" r="2.200"/><rect x="42.0" y="13.0" width="1" height="1" fill="#ff0000" stroke="none"/><circle cx="52.5" cy="3.5" r="2.200"/><rect x="52.0" y="3.0" width="1" height="1" fill="#ff0000" stroke="none"/></g></svg>
<svg style="left:9px;top:649px" width="60" height="18" viewBox="0 0 60 18"><rect y="0.500" width="60" height="17.500" fill="#000"/><g fill="#000" stroke="#ff6400"><polyline fill="none" points="2.5,13.5 12.5,3.5 22.5,13.5 32.5,3.5 42.5,13.5 52.5,3.5 59,10"/><circle cx="2.5" cy="13.5" r="2.200"/><rect x="2.0" y="13.0" width="1" height="1" fill="#ff6400" stroke="none"/><circle cx="12.5" cy="3.5" r="2.200"/><rect x="12.0" y="3.0" width="1" height="1" fill="#ff6400" stroke="none"/><circle cx="22.5" cy="13.5" r="2.200"/><rect x="22.0" y="13.0" width="1" height="1" fill="#ff6400" stroke="none"/><circle cx="32.5" cy="3.5" r="2.200"/><rect x="32.0" y="3.0" width="1" height="1" fill="#ff6400" stroke="none"/><circle cx="42.5" cy="13.5" r="2.200"/><rect x="42.0" y="13.0" width="1" height="1" fill="#ff6400" stroke="none"/><circle cx="52.5" cy="3.5" r="2.200"/><rect x="52.0" y="3.0" width="1" height="1" fill="#ff6400" stroke="none"/></g></svg>
<svg style="left:9px;top:672px" width="60" height="18" viewBox="0 0 60 18"><rect y="0.500" width="60" height="17.500" fill="#000"/><g fill="#000" stroke="#ff00ff"><polyline fill="none" points="2.5,13.5 12.5,3.5 22.5,13.5 32.5,3.5 42.5,13.5 52.5,3.5 59,10"/><circle cx="2.5" cy="13.5" r="2.200"/><rect x="2.0" y="13.0" width="1" height="1" fill="#ff00ff" stroke="none"/><circle cx="12.5" cy="3.5" r="2.200"/><rect x="12.0" y="3.0" width="1" height="1" fill="#ff00ff" stroke="none"/><circle cx="22.5" cy="13.5" r="2.200"/><rect x="22.0" y="13.0" width="1" height="1" fill="#ff00ff" stroke="none"/><circle cx="32.5" cy="3.5" r="2.200"/><rect x="32.0" y="3.0" width="1" height="1" fill="#ff00ff" stroke="none"/><circle cx="42.5" cy="13.5" r="2.200"/><rect x="42.0" y="13.0" width="1" height="1" fill="#ff00ff" stroke="none"/><circle cx="52.5" cy="3.5" r="2.200"/><rect x="52.0" y="3.0" width="1" height="1" fill="#ff00ff" stroke="none"/></g></svg>
<div class="pf" style="left:74px;top:529px;width:329px;height:166px"></div>
<div class="k" style="left:76px;top:531px;width:324px;height:162px"></div>
<div class="w" style="left:77px;top:532px;width:68px;height:22px"></div>
<div class="w" style="left:148px;top:532px;width:125px;height:22px"></div>
<div class="w" style="left:274px;top:532px;width:125px;height:22px"></div>
<span class="t" style="left:120.0px;top:534.0px;font-size:12px;font-weight:bold;transform:scaleX(0.930);transform-origin:0 0;">1</span>
<span class="t" style="left:131.8px;top:534.0px;font-size:12px;font-weight:bold;transform:scaleX(0.947);transform-origin:0 0;">X</span>
<div class="w" style="left:77px;top:555px;width:68px;height:22px"></div>
<div class="w" style="left:148px;top:555px;width:125px;height:22px"></div>
<div class="w" style="left:274px;top:555px;width:125px;height:22px"></div>
<span class="t" style="left:120.0px;top:557.0px;font-size:12px;font-weight:bold;transform:scaleX(0.930);transform-origin:0 0;">2</span>
<span class="t" style="left:131.8px;top:557.0px;font-size:12px;font-weight:bold;transform:scaleX(0.947);transform-origin:0 0;">X</span>
<div class="w" style="left:77px;top:578px;width:68px;height:22px"></div>
<div class="w" style="left:148px;top:578px;width:125px;height:22px"></div>
<div class="w" style="left:274px;top:578px;width:125px;height:22px"></div>
<span class="t" style="left:120.0px;top:580.0px;font-size:12px;font-weight:bold;transform:scaleX(0.930);transform-origin:0 0;">3</span>
<span class="t" style="left:131.8px;top:580.0px;font-size:12px;font-weight:bold;transform:scaleX(0.947);transform-origin:0 0;">X</span>
<div class="w" style="left:77px;top:601px;width:68px;height:22px"></div>
<div class="w" style="left:148px;top:601px;width:125px;height:22px"></div>
<div class="w" style="left:274px;top:601px;width:125px;height:22px"></div>
<span class="t" style="left:119.5px;top:603.0px;font-size:12px;font-weight:bold;transform:scaleX(0.930);transform-origin:0 0;">4</span>
<span class="t" style="left:131.8px;top:603.0px;font-size:12px;font-weight:bold;transform:scaleX(0.947);transform-origin:0 0;">X</span>
<div class="w" style="left:77px;top:624px;width:68px;height:22px"></div>
<div class="w" style="left:148px;top:624px;width:125px;height:22px"></div>
<div class="w" style="left:274px;top:624px;width:125px;height:22px"></div>
<span class="t" style="left:120.0px;top:626.0px;font-size:12px;font-weight:bold;transform:scaleX(0.930);transform-origin:0 0;">5</span>
<span class="t" style="left:131.8px;top:626.0px;font-size:12px;font-weight:bold;transform:scaleX(0.947);transform-origin:0 0;">X</span>
<div class="w" style="left:77px;top:647px;width:68px;height:22px"></div>
<div class="w" style="left:148px;top:647px;width:125px;height:22px"></div>
<div class="w" style="left:274px;top:647px;width:125px;height:22px"></div>
<span class="t" style="left:120.0px;top:649.0px;font-size:12px;font-weight:bold;transform:scaleX(0.930);transform-origin:0 0;">6</span>
<span class="t" style="left:131.8px;top:649.0px;font-size:12px;font-weight:bold;transform:scaleX(0.947);transform-origin:0 0;">X</span>
<div class="w" style="left:77px;top:670px;width:68px;height:22px"></div>
<div class="w" style="left:148px;top:670px;width:125px;height:22px"></div>
<div class="w" style="left:274px;top:670px;width:125px;height:22px"></div>
<span class="t" style="left:120.0px;top:672.0px;font-size:12px;font-weight:bold;transform:scaleX(0.930);transform-origin:0 0;">7</span>
<span class="t" style="left:131.8px;top:672.0px;font-size:12px;font-weight:bold;transform:scaleX(0.947);transform-origin:0 0;">X</span>
<div class="w" style="left:146px;top:531px;width:1px;height:162px"></div>
<div class="pf" style="left:412px;top:530px;width:69px;height:165px;border-top:1px solid #fbe4c4;border-left:1px solid #fbe4c4"></div>
<svg style="left:416px;top:534px" width="60" height="18" viewBox="0 0 60 18"><rect y="0.500" width="60" height="17.500" fill="#000"/><g fill="#000" stroke="#ffffff"><polyline fill="none" points="2.5,13.5 12.5,3.5 22.5,13.5 32.5,3.5 42.5,13.5 52.5,3.5 59,10"/><circle cx="2.5" cy="13.5" r="2.200"/><rect x="2.0" y="13.0" width="1" height="1" fill="#ffffff" stroke="none"/><circle cx="12.5" cy="3.5" r="2.200"/><rect x="12.0" y="3.0" width="1" height="1" fill="#ffffff" stroke="none"/><circle cx="22.5" cy="13.5" r="2.200"/><rect x="22.0" y="13.0" width="1" height="1" fill="#ffffff" stroke="none"/><circle cx="32.5" cy="3.5" r="2.200"/><rect x="32.0" y="3.0" width="1" height="1" fill="#ffffff" stroke="none"/><circle cx="42.5" cy="13.5" r="2.200"/><rect x="42.0" y="13.0" width="1" height="1" fill="#ffffff" stroke="none"/><circle cx="52.5" cy="3.5" r="2.200"/><rect x="52.0" y="3.0" width="1" height="1" fill="#ffffff" stroke="none"/></g></svg>
<svg style="left:416px;top:557px" width="60" height="18" viewBox="0 0 60 18"><rect y="0.500" width="60" height="17.500" fill="#000"/><g fill="#000" stroke="#ffff00"><polyline fill="none" points="2.5,13.5 12.5,3.5 22.5,13.5 32.5,3.5 42.5,13.5 52.5,3.5 59,10"/><circle cx="2.5" cy="13.5" r="2.200"/><rect x="2.0" y="13.0" width="1" height="1" fill="#ffff00" stroke="none"/><circle cx="12.5" cy="3.5" r="2.200"/><rect x="12.0" y="3.0" width="1" height="1" fill="#ffff00" stroke="none"/><circle cx="22.5" cy="13.5" r="2.200"/><rect x="22.0" y="13.0" width="1" height="1" fill="#ffff00" stroke="none"/><circle cx="32.5" cy="3.5" r="2.200"/><rect x="32.0" y="3.0" width="1" height="1" fill="#ffff00" stroke="none"/><circle cx="42.5" cy="13.5" r="2.200"/><rect x="42.0" y="13.0" width="1" height="1" fill="#ffff00" stroke="none"/><circle cx="52.5" cy="3.5" r="2.200"/><rect x="52.0" y="3.0" width="1" height="1" fill="#ffff00" stroke="none"/></g></svg>
<svg style="left:416px;top:580px" width="60" height="18" viewBox="0 0 60 18"><rect y="0.500" width="60" height="17.500" fill="#000"/><g fill="#000" stroke="#8cf0f0"><polyline fill="none" points="2.5,13.5 12.5,3.5 22.5,13.5 32.5,3.5 42.5,13.5 52.5,3.5 59,10"/><circle cx="2.5" cy="13.5" r="2.200"/><rect x="2.0" y="13.0" width="1" height="1" fill="#8cf0f0" stroke="none"/><circle cx="12.5" cy="3.5" r="2.200"/><rect x="12.0" y="3.0" width="1" height="1" fill="#8cf0f0" stroke="none"/><circle cx="22.5" cy="13.5" r="2.200"/><rect x="22.0" y="13.0" width="1" height="1" fill="#8cf0f0" stroke="none"/><circle cx="32.5" cy="3.5" r="2.200"/><rect x="32.0" y="3.0" width="1" height="1" fill="#8cf0f0" stroke="none"/><circle cx="42.5" cy="13.5" r="2.200"/><rect x="42.0" y="13.0" width="1" height="1" fill="#8cf0f0" stroke="none"/><circle cx="52.5" cy="3.5" r="2.200"/><rect x="52.0" y="3.0" width="1" height="1" fill="#8cf0f0" stroke="none"/></g></svg>
<svg style="left:416px;top:603px" width="60" height="18" viewBox="0 0 60 18"><rect y="0.500" width="60" height="17.500" fill="#000"/><g fill="#000" stroke="#00ff00"><polyline fill="none" points="2.5,13.5 12.5,3.5 22.5,13.5 32.5,3.5 42.5,13.5 52.5,3.5 59,10"/><circle cx="2.5" cy="13.5" r="2.200"/><rect x="2.0" y="13.0" width="1" height="1" fill="#00ff00" stroke="none"/><circle cx="12.5" cy="3.5" r="2.200"/><rect x="12.0" y="3.0" width="1" height="1" fill="#00ff00" stroke="none"/><circle cx="22.5" cy="13.5" r="2.200"/><rect x="22.0" y="13.0" width="1" height="1" fill="#00ff00" stroke="none"/><circle cx="32.5" cy="3.5" r="2.200"/><rect x="32.0" y="3.0" width="1" height="1" fill="#00ff00" stroke="none"/><circle cx="42.5" cy="13.5" r="2.200"/><rect x="42.0" y="13.0" width="1" height="1" fill="#00ff00" stroke="none"/><circle cx="52.5" cy="3.5" r="2.200"/><rect x="52.0" y="3.0" width="1" height="1" fill="#00ff00" stroke="none"/></g></svg>
<svg style="left:416px;top:626px" width="60" height="18" viewBox="0 0 60 18"><rect y="0.500" width="60" height="17.500" fill="#000"/><g fill="#000" stroke="#ff0000"><polyline fill="none" points="2.5,13.5 12.5,3.5 22.5,13.5 32.5,3.5 42.5,13.5 52.5,3.5 59,10"/><circle cx="2.5" cy="13.5" r="2.200"/><rect x="2.0" y="13.0" width="1" height="1" fill="#ff0000" stroke="none"/><circle cx="12.5" cy="3.5" r="2.200"/><rect x="12.0" y="3.0" width="1" height="1" fill="#ff0000" stroke="none"/><circle cx="22.5" cy="13.5" r="2.200"/><rect x="22.0" y="13.0" width="1" height="1" fill="#ff0000" stroke="none"/><circle cx="32.5" cy="3.5" r="2.200"/><rect x="32.0" y="3.0" width="1" height="1" fill="#ff0000" stroke="none"/><circle cx="42.5" cy="13.5" r="2.200"/><rect x="42.0" y="13.0" width="1" height="1" fill="#ff0000" stroke="none"/><circle cx="52.5" cy="3.5" r="2.200"/><rect x="52.0" y="3.0" width="1" height="1" fill="#ff0000" stroke="none"/></g></svg>
<svg style="left:416px;top:649px" width="60" height="18" viewBox="0 0 60 18"><rect y="0.500" width="60" height="17.500" fill="#000"/><g fill="#000" stroke="#ff6400"><polyline fill="none" points="2.5,13.5 12.5,3.5 22.5,13.5 32.5,3.5 42.5,13.5 52.5,3.5 59,10"/><circle cx="2.5" cy="13.5" r="2.200"/><rect x="2.0" y="13.0" width="1" height="1" fill="#ff6400" stroke="none"/><circle cx="12.5" cy="3.5" r="2.200"/><rect x="12.0" y="3.0" width="1" height="1" fill="#ff6400" stroke="none"/><circle cx="22.5" cy="13.5" r="2.200"/><rect x="22.0" y="13.0" width="1" height="1" fill="#ff6400" stroke="none"/><circle cx="32.5" cy="3.5" r="2.200"/><rect x="32.0" y="3.0" width="1" height="1" fill="#ff6400" stroke="none"/><circle cx="42.5" cy="13.5" r="2.200"/><rect x="42.0" y="13.0" width="1" height="1" fill="#ff6400" stroke="none"/><circle cx="52.5" cy="3.5" r="2.200"/><rect x="52.0" y="3.0" width="1" height="1" fill="#ff6400" stroke="none"/></g></svg>
<svg style="left:416px;top:672px" width="60" height="18" viewBox="0 0 60 18"><rect y="0.500" width="60" height="17.500" fill="#000"/><g fill="#000" stroke="#ff00ff"><polyline fill="none" points="2.5,13.5 12.5,3.5 22.5,13.5 32.5,3.5 42.5,13.5 52.5,3.5 59,10"/><circle cx="2.5" cy="13.5" r="2.200"/><rect x="2.0" y="13.0" width="1" height="1" fill="#ff00ff" stroke="none"/><circle cx="12.5" cy="3.5" r="2.200"/><rect x="12.0" y="3.0" width="1" height="1" fill="#ff00ff" stroke="none"/><circle cx="22.5" cy="13.5" r="2.200"/><rect x="22.0" y="13.0" width="1" height="1" fill="#ff00ff" stroke="none"/><circle cx="32.5" cy="3.5" r="2.200"/><rect x="32.0" y="3.0" width="1" height="1" fill="#ff00ff" stroke="none"/><circle cx="42.5" cy="13.5" r="2.200"/><rect x="42.0" y="13.0" width="1" height="1" fill="#ff00ff" stroke="none"/><circle cx="52.5" cy="3.5" r="2.200"/><rect x="52.0" y="3.0" width="1" height="1" fill="#ff00ff" stroke="none"/></g></svg>
<div class="pf" style="left:481px;top:529px;width:329px;height:166px"></div>
<div class="k" style="left:483px;top:531px;width:324px;height:162px"></div>
<div class="w" style="left:484px;top:532px;width:68px;height:22px"></div>
<div class="w" style="left:555px;top:532px;width:125px;height:22px"></div>
<div class="w" style="left:681px;top:532px;width:125px;height:22px"></div>
<span class="t" style="left:524.5px;top:534.0px;font-size:12px;font-weight:bold;transform:scaleX(0.930);transform-origin:0 0;">1</span>
<span class="t" style="left:536.7px;top:534.0px;font-size:12px;font-weight:bold;transform:scaleX(1.090);transform-origin:0 0;">H</span>
<div class="w" style="left:484px;top:555px;width:68px;height:22px"></div>
<div class="w" style="left:555px;top:555px;width:125px;height:22px"></div>
<div class="w" style="left:681px;top:555px;width:125px;height:22px"></div>
<span class="t" style="left:524.5px;top:557.0px;font-size:12px;font-weight:bold;transform:scaleX(0.930);transform-origin:0 0;">2</span>
<span class="t" style="left:536.7px;top:557.0px;font-size:12px;font-weight:bold;transform:scaleX(1.090);transform-origin:0 0;">H</span>
<div class="w" style="left:484px;top:578px;width:68px;height:22px"></div>
<div class="w" style="left:555px;top:578px;width:125px;height:22px"></div>
<div class="w" style="left:681px;top:578px;width:125px;height:22px"></div>
<span class="t" style="left:524.5px;top:580.0px;font-size:12px;font-weight:bold;transform:scaleX(0.930);transform-origin:0 0;">3</span>
<span class="t" style="left:536.7px;top:580.0px;font-size:12px;font-weight:bold;transform:scaleX(1.090);transform-origin:0 0;">H</span>
<div class="w" style="left:484px;top:601px;width:68px;height:22px"></div>
<div class="w" style="left:555px;top:601px;width:125px;height:22px"></div>
<div class="w" style="left:681px;top:601px;width:125px;height:22px"></div>
<span class="t" style="left:524.0px;top:603.0px;font-size:12px;font-weight:bold;transform:scaleX(0.930);transform-origin:0 0;">4</span>
<span class="t" style="left:536.7px;top:603.0px;font-size:12px;font-weight:bold;transform:scaleX(1.090);transform-origin:0 0;">H</span>
<div class="w" style="left:484px;top:624px;width:68px;height:22px"></div>
<div class="w" style="left:555px;top:624px;width:125px;height:22px"></div>
<div class="w" style="left:681px;top:624px;width:125px;height:22px"></div>
<span class="t" style="left:524.5px;top:626.0px;font-size:12px;font-weight:bold;transform:scaleX(0.930);transform-origin:0 0;">5</span>
<span class="t" style="left:536.7px;top:626.0px;font-size:12px;font-weight:bold;transform:scaleX(1.090);transform-origin:0 0;">H</span>
<div class="w" style="left:484px;top:647px;width:68px;height:22px"></div>
<div class="w" style="left:555px;top:647px;width:125px;height:22px"></div>
<div class="w" style="left:681px;top:647px;width:125px;height:22px"></div>
<span class="t" style="left:524.5px;top:649.0px;font-size:12px;font-weight:bold;transform:scaleX(0.930);transform-origin:0 0;">6</span>
<span class="t" style="left:536.7px;top:649.0px;font-size:12px;font-weight:bold;transform:scaleX(1.090);transform-origin:0 0;">H</span>
<div class="w" style="left:484px;top:670px;width:68px;height:22px"></div>
<div class="w" style="left:555px;top:670px;width:125px;height:22px"></div>
<div class="w" style="left:681px;top:670px;width:125px;height:22px"></div>
<span class="t" style="left:524.5px;top:672.0px;font-size:12px;font-weight:bold;transform:scaleX(0.930);transform-origin:0 0;">7</span>
<span class="t" style="left:536.7px;top:672.0px;font-size:12px;font-weight:bold;transform:scaleX(1.090);transform-origin:0 0;">H</span>
<div class="w" style="left:553px;top:531px;width:1px;height:162px"></div>
<div style="left:274px;top:555px;width:3px;height:1px;background:#00f"></div><div style="left:274px;top:555px;width:1px;height:3px;background:#00f"></div>
<div style="left:555px;top:532px;width:3px;height:1px;background:#00f"></div><div style="left:555px;top:532px;width:1px;height:3px;background:#00f"></div>
<div style="left:915px;top:89px;width:80px;height:22px;background:#ff0000;border:1px solid #000;box-shadow:inset -2px -2px 0 #8c0000,inset 1px 1px 0 #ff8c8c"></div>
<span class="t" style="left:937.3px;top:95.0px;font-size:12px;transform:scaleX(1.036);transform-origin:0 0;">終</span>
<span class="t" style="left:959.6px;top:95.0px;font-size:12px;transform:scaleX(1.232);transform-origin:0 0;">了</span>
<span class="t" style="left:818.4px;top:116.0px;font-size:11.300px;font-weight:500;-webkit-text-stroke:0.300px #000;transform:scaleX(0.747);transform-origin:0 0;">ファイル</span>
<span class="t" style="left:853.8px;top:116.0px;font-size:11.300px;font-weight:500;-webkit-text-stroke:0.300px #000;transform:scaleX(1.100);transform-origin:0 0;">名</span>
<span class="t" style="left:819.2px;top:151.0px;font-size:11.300px;font-weight:500;-webkit-text-stroke:0.300px #000;transform:scaleX(1.056);transform-origin:0 0;">試験名</span>
<span class="t" style="left:819.2px;top:186.0px;font-size:11.300px;font-weight:500;-webkit-text-stroke:0.300px #000;transform:scaleX(1.059);transform-origin:0 0;">試験体名</span>
<div style="left:818px;top:131px;width:178px;height:18px;background:#f9c260;border:1px solid;border-color:#8c8c84 #000 #000 #8c8c84"></div><div class="w" style="left:819.5px;top:133px;width:2.500px;height:14px;background:#fdf3dc"></div><div class="w" style="left:824px;top:133px;width:169.5px;height:15px;border-top:1px solid #787878;border-left:1px solid #787878"></div>
<span class="t" style="left:825.6px;top:137.0px;font-size:11.300px;font-weight:500;-webkit-text-stroke:0.300px #000;transform:scaleX(1.049);transform-origin:0 0;">水平縦荷重試験</span>
<span class="t" style="left:912.3px;top:137.0px;font-size:11.300px;font-weight:500;-webkit-text-stroke:0.300px #000;transform:scaleX(0.741);transform-origin:0 0;">ケース</span>
<span class="t" style="left:936.3px;top:136.0px;font-size:12px;font-weight:bold;">11-2.txt</span>
<div style="left:818px;top:166px;width:178px;height:18px;background:#f9c260;border:1px solid;border-color:#8c8c84 #000 #000 #8c8c84"></div><div class="w" style="left:819.5px;top:168px;width:2.500px;height:14px;background:#fdf3dc"></div><div class="w" style="left:824px;top:168px;width:169.5px;height:15px;border-top:1px solid #787878;border-left:1px solid #787878"></div>
<span class="t" style="left:825.6px;top:172.0px;font-size:11.300px;font-weight:500;-webkit-text-stroke:0.300px #000;transform:scaleX(1.049);transform-origin:0 0;">水平縦荷重試験</span>
<div style="left:818px;top:201px;width:178px;height:18px;background:#f9c260;border:1px solid;border-color:#8c8c84 #000 #000 #8c8c84"></div><div class="w" style="left:819.5px;top:203px;width:2.500px;height:14px;background:#fdf3dc"></div><div class="w" style="left:824px;top:203px;width:169.5px;height:15px;border-top:1px solid #787878;border-left:1px solid #787878"></div>
<span class="t" style="left:824.4px;top:207.0px;font-size:11.300px;font-weight:500;-webkit-text-stroke:0.300px #000;transform:scaleX(0.756);transform-origin:0 0;">ケース</span>
<span class="t" style="left:848.8px;top:206.0px;font-size:12px;font-weight:bold;transform:scaleX(1.016);transform-origin:0 0;">11-2</span>
<span class="t" style="left:820.5px;top:233.0px;font-size:10.100px;font-weight:500;-webkit-text-stroke:0.300px #000;transform:scaleX(1.049);transform-origin:0 0;">測定点</span>
<div style="left:906px;top:228px;width:80px;height:21px;background:#ffff96;border:1px solid #000;box-shadow:inset -2px -2px 0 #8a8a48,inset 1px 1px 0 #ffffd8"></div>
<span class="t" style="left:915.2px;top:234.0px;font-size:11.300px;font-weight:500;-webkit-text-stroke:0.300px #000;transform:scaleX(0.793);transform-origin:0 0;">ファイル</span>
<span class="t" style="left:952.1px;top:234.0px;font-size:11.300px;font-weight:500;-webkit-text-stroke:0.300px #000;">設定</span>
<div style="left:906px;top:254px;width:80px;height:22px;background:#ffff96;border:1px solid #000;box-shadow:inset -2px -2px 0 #8a8a48,inset 1px 1px 0 #ffffd8"></div>
<span class="t" style="left:922.3px;top:261.0px;font-size:11.300px;font-weight:500;-webkit-text-stroke:0.300px #000;transform:scaleX(1.039);transform-origin:0 0;">機器設定</span>
<div style="left:993px;top:254px;width:51px;height:22px;background:#ffff96;border:1px solid #000;box-shadow:inset -2px -2px 0 #8a8a48,inset 1px 1px 0 #ffffd8"></div>
<span class="t" style="left:1000.0px;top:261.0px;font-size:11.300px;font-weight:500;-webkit-text-stroke:0.300px #000;transform:scaleX(1.044);transform-origin:0 0;">機器点</span>
<div class="sv" style="left:906px;top:281px;width:80px;height:22px"></div><div style="left:908.8px;top:283.8px;width:74.6px;height:16.6px;background:#ff0000"></div>
<svg style="left:912px;top:286px" width="36" height="7" viewBox="0 0 36 7"><path d="M1.200 4.600L2.300 5.100L4 4.600L9 3.700L16 2.900L23 2L34 1.300" stroke="#ffe0e0" stroke-width="1.100" fill="none" opacity="0.800"/></svg>
<span class="t" style="left:922.5px;top:288.0px;font-size:11.300px;font-weight:500;transform:scaleX(1.059);transform-origin:0 0;">一括計測</span>
<div class="sv" style="left:906px;top:307px;width:80px;height:22px"></div><div style="left:908.8px;top:309.8px;width:74.6px;height:16.6px;background:#ff0000"></div>
<svg style="left:912px;top:312px" width="36" height="7" viewBox="0 0 36 7"><path d="M1.200 4.600L2.300 5.100L4 4.600L9 3.700L16 2.900L23 2L34 1.300" stroke="#ffe0e0" stroke-width="1.100" fill="none" opacity="0.800"/></svg>
<span class="t" style="left:933.9px;top:314.0px;font-size:11.300px;font-weight:500;transform:scaleX(1.077);transform-origin:0 0;">自動</span>
<div class="sv" style="left:906px;top:345px;width:80px;height:22px"></div><div style="left:908.8px;top:347.8px;width:74.6px;height:16.6px;background:#5aff00"></div>
<span class="t" style="left:912.9px;top:352.0px;font-size:11.300px;font-weight:500;-webkit-text-stroke:0.300px #000;transform:scaleX(1.068);transform-origin:0 0;">自動視準</span>
<span class="t" style="left:960.9px;top:352.0px;font-size:11.300px;font-weight:500;-webkit-text-stroke:0.300px #000;transform:scaleX(0.892);transform-origin:0 0;">あり</span>
<div class="w" style="left:818px;top:246px;width:80px;height:162px;border:1px solid #000"></div>
<div style="left:881px;top:247px;width:16px;height:160px;background:#f0f0f0"></div>
<div style="left:881px;top:285px;width:16px;height:105px;background:#cdcdcd"></div>
<svg style="left:884px;top:252px" width="10" height="8" viewBox="0 0 10 8"><path d="M1.200 6L5 2.200L8.800 6" stroke="#5a5a5a" stroke-width="1.800" fill="none"/></svg>
<svg style="left:884px;top:395px" width="10" height="8" viewBox="0 0 10 8"><path d="M1.200 2L5 5.800L8.800 2" stroke="#5a5a5a" stroke-width="1.800" fill="none"/></svg>
<span class="t" style="left:854.5px;top:249.0px;font-size:10.500px;-webkit-text-stroke:0.350px #000;transform:scaleX(0.900);transform-origin:0 0;">3</span>
<span class="t" style="left:854.5px;top:265.0px;font-size:10.500px;-webkit-text-stroke:0.350px #000;transform:scaleX(0.900);transform-origin:0 0;">4</span>
<span class="t" style="left:854.5px;top:281.0px;font-size:10.500px;-webkit-text-stroke:0.350px #000;transform:scaleX(0.900);transform-origin:0 0;">5</span>
<span class="t" style="left:854.5px;top:297.0px;font-size:10.500px;-webkit-text-stroke:0.350px #000;transform:scaleX(0.900);transform-origin:0 0;">6</span>
<span class="t" style="left:854.5px;top:313.0px;font-size:10.500px;-webkit-text-stroke:0.350px #000;transform:scaleX(0.900);transform-origin:0 0;">7</span>
<span class="t" style="left:854.5px;top:329.0px;font-size:10.500px;-webkit-text-stroke:0.350px #000;transform:scaleX(0.900);transform-origin:0 0;">8</span>
<span class="t" style="left:854.5px;top:345.0px;font-size:10.500px;-webkit-text-stroke:0.350px #000;transform:scaleX(0.900);transform-origin:0 0;">9</span>
<span class="t" style="left:851.6px;top:361.0px;font-size:10.500px;-webkit-text-stroke:0.350px #000;transform:scaleX(0.900);transform-origin:0 0;">10</span>
<span class="t" style="left:852.0px;top:377.0px;font-size:10.500px;-webkit-text-stroke:0.350px #000;transform:scaleX(0.900);transform-origin:0 0;">11</span>
<span class="t" style="left:851.7px;top:393.0px;font-size:10.500px;-webkit-text-stroke:0.350px #000;transform:scaleX(0.900);transform-origin:0 0;">12</span>
<span class="t" style="left:932.6px;top:375.0px;font-size:10.200px;font-weight:500;-webkit-text-stroke:0.300px #000;transform:scaleX(1.058);transform-origin:0 0;">荷重</span>
<span class="t" style="left:987.9px;top:372.0px;font-size:11.300px;font-weight:500;-webkit-text-stroke:0.300px #000;transform:scaleX(1.024);transform-origin:0 0;">計測数</span>
<div class="or" style="left:917px;top:386px;width:58px;height:24px"></div>
<div class="w" style="left:923px;top:388px;width:50px;height:20px;border:1px solid;border-color:#444 #aaa #aaa #444"></div>
<div class="or" style="left:983px;top:387px;width:50px;height:21px"></div>
<div class="w" style="left:985px;top:389px;width:46px;height:17px;border-top:1px solid #999;border-left:1px solid #999"></div>
<span class="t" style="left:1018.2px;top:392.0px;font-size:12px;font-weight:bold;transform:scaleX(0.792);transform-origin:0 0;">17</span>
<div style="left:818px;top:422px;width:80px;height:22px;background:#ffc228;border:1px solid #000;box-shadow:inset -2px -2px 0 #8a6410,inset 1px 1px 0 #ffe498"></div>
<span class="t" style="left:840.4px;top:429.0px;font-size:11.300px;font-weight:500;-webkit-text-stroke:0.300px #000;transform:scaleX(0.978);transform-origin:0 0;">保</span>
<span class="t" style="left:863.9px;top:429.0px;font-size:11.300px;font-weight:500;-webkit-text-stroke:0.300px #000;transform:scaleX(1.060);transform-origin:0 0;">存</span>
<div class="sv" style="left:916px;top:422px;width:60px;height:40px"></div>
<div style="left:918.700px;top:424.600px;width:55.200px;height:35px;background:#1e90ff"></div>
<svg style="left:930px;top:431px" width="18" height="6" viewBox="0 0 18 6"><path d="M1 4.500C5 2 10 1 17 1.500" stroke="#cfe6ff" stroke-width="1.300" fill="none" opacity="0.900"/></svg>
<span class="t" style="left:925.8px;top:438.0px;font-size:11px;transform:scaleX(0.985);transform-origin:0 0;">計</span>
<span class="t" style="left:952.9px;top:438.0px;font-size:11px;transform:scaleX(1.118);transform-origin:0 0;">測</span>
<span class="t" style="left:866.4px;top:465.0px;font-size:10.200px;font-weight:500;-webkit-text-stroke:0.300px #000;transform:scaleX(1.057);transform-origin:0 0;">測定値</span>
<div class="pf" style="left:816px;top:478px;width:227px;height:212px"></div>
<div class="k" style="left:818px;top:480px;width:205px;height:209px"></div>
<div class="w" style="left:819px;top:481px;width:33px;height:13px"></div>
<div class="w" style="left:855px;top:481px;width:55px;height:13px"></div>
<div class="w" style="left:911px;top:481px;width:55px;height:13px"></div>
<div class="w" style="left:967px;top:481px;width:55px;height:13px"></div>
<span class="t" style="left:878.2px;top:483.0px;font-size:12px;transform:scaleX(0.893);transform-origin:0 0;">X</span>
<span class="t" style="left:933.8px;top:483.0px;font-size:12px;transform:scaleX(0.960);transform-origin:0 0;">Y</span>
<span class="t" style="left:988.6px;top:483.0px;font-size:12px;transform:scaleX(1.126);transform-origin:0 0;">H</span>
<div class="w" style="left:819px;top:497px;width:33px;height:15px"></div>
<div class="w" style="left:855px;top:497px;width:55px;height:15px"></div>
<div class="w" style="left:911px;top:497px;width:55px;height:15px"></div>
<div class="w" style="left:967px;top:497px;width:55px;height:15px"></div>
<span class="t" style="left:839.6px;top:499.0px;font-size:12px;transform:scaleX(0.920);transform-origin:0 0;">1</span>
<div class="w" style="left:819px;top:513px;width:33px;height:15px"></div>
<div class="w" style="left:855px;top:513px;width:55px;height:15px"></div>
<div class="w" style="left:911px;top:513px;width:55px;height:15px"></div>
<div class="w" style="left:967px;top:513px;width:55px;height:15px"></div>
<span class="t" style="left:839.6px;top:515.0px;font-size:12px;transform:scaleX(0.920);transform-origin:0 0;">2</span>
<div class="w" style="left:819px;top:529px;width:33px;height:15px"></div>
<div class="w" style="left:855px;top:529px;width:55px;height:15px"></div>
<div class="w" style="left:911px;top:529px;width:55px;height:15px"></div>
<div class="w" style="left:967px;top:529px;width:55px;height:15px"></div>
<span class="t" style="left:839.4px;top:531.0px;font-size:12px;transform:scaleX(0.920);transform-origin:0 0;">3</span>
<div class="w" style="left:819px;top:545px;width:33px;height:15px"></div>
<div class="w" style="left:855px;top:545px;width:55px;height:15px"></div>
<div class="w" style="left:911px;top:545px;width:55px;height:15px"></div>
<div class="w" style="left:967px;top:545px;width:55px;height:15px"></div>
<span class="t" style="left:839.4px;top:547.0px;font-size:12px;transform:scaleX(0.920);transform-origin:0 0;">4</span>
<div class="w" style="left:819px;top:561px;width:33px;height:15px"></div>
<div class="w" style="left:855px;top:561px;width:55px;height:15px"></div>
<div class="w" style="left:911px;top:561px;width:55px;height:15px"></div>
<div class="w" style="left:967px;top:561px;width:55px;height:15px"></div>
<span class="t" style="left:839.4px;top:563.0px;font-size:12px;transform:scaleX(0.920);transform-origin:0 0;">5</span>
<div class="w" style="left:819px;top:577px;width:33px;height:15px"></div>
<div class="w" style="left:855px;top:577px;width:55px;height:15px"></div>
<div class="w" style="left:911px;top:577px;width:55px;height:15px"></div>
<div class="w" style="left:967px;top:577px;width:55px;height:15px"></div>
<span class="t" style="left:839.4px;top:579.0px;font-size:12px;transform:scaleX(0.920);transform-origin:0 0;">6</span>
<div class="w" style="left:819px;top:593px;width:33px;height:15px"></div>
<div class="w" style="left:855px;top:593px;width:55px;height:15px"></div>
<div class="w" style="left:911px;top:593px;width:55px;height:15px"></div>
<div class="w" style="left:967px;top:593px;width:55px;height:15px"></div>
<span class="t" style="left:839.6px;top:595.0px;font-size:12px;transform:scaleX(0.920);transform-origin:0 0;">7</span>
<div class="w" style="left:819px;top:609px;width:33px;height:15px"></div>
<div class="w" style="left:855px;top:609px;width:55px;height:15px"></div>
<div class="w" style="left:911px;top:609px;width:55px;height:15px"></div>
<div class="w" style="left:967px;top:609px;width:55px;height:15px"></div>
<span class="t" style="left:839.4px;top:611.0px;font-size:12px;transform:scaleX(0.920);transform-origin:0 0;">8</span>
<div class="w" style="left:819px;top:625px;width:33px;height:15px"></div>
<div class="w" style="left:855px;top:625px;width:55px;height:15px"></div>
<div class="w" style="left:911px;top:625px;width:55px;height:15px"></div>
<div class="w" style="left:967px;top:625px;width:55px;height:15px"></div>
<span class="t" style="left:839.6px;top:627.0px;font-size:12px;transform:scaleX(0.920);transform-origin:0 0;">9</span>
<div class="w" style="left:819px;top:641px;width:33px;height:15px"></div>
<div class="w" style="left:855px;top:641px;width:55px;height:15px"></div>
<div class="w" style="left:911px;top:641px;width:55px;height:15px"></div>
<div class="w" style="left:967px;top:641px;width:55px;height:15px"></div>
<span class="t" style="left:833.1px;top:643.0px;font-size:12px;transform:scaleX(0.920);transform-origin:0 0;">10</span>
<div class="w" style="left:819px;top:657px;width:33px;height:15px"></div>
<div class="w" style="left:855px;top:657px;width:55px;height:15px"></div>
<div class="w" style="left:911px;top:657px;width:55px;height:15px"></div>
<div class="w" style="left:967px;top:657px;width:55px;height:15px"></div>
<span class="t" style="left:834.1px;top:659.0px;font-size:12px;transform:scaleX(0.920);transform-origin:0 0;">11</span>
<div class="w" style="left:819px;top:673px;width:33px;height:15px"></div>
<div class="w" style="left:855px;top:673px;width:55px;height:15px"></div>
<div class="w" style="left:911px;top:673px;width:55px;height:15px"></div>
<div class="w" style="left:967px;top:673px;width:55px;height:15px"></div>
<span class="t" style="left:833.4px;top:675.0px;font-size:12px;transform:scaleX(0.920);transform-origin:0 0;">12</span>
<div class="w" style="left:818px;top:495px;width:205px;height:1px"></div>
<div class="w" style="left:853px;top:480px;width:1px;height:209px"></div>
<div style="left:855px;top:513px;width:3px;height:1px;background:#00f"></div><div style="left:855px;top:513px;width:1px;height:3px;background:#00f"></div>
<div style="left:1023px;top:480px;width:18px;height:209px;background:#f0f0f0"></div>
<div style="left:1024.400px;top:498px;width:14.400px;height:160px;background:#cdcdcd"></div>
<svg style="left:1027px;top:485px" width="11" height="8" viewBox="0 0 11 8"><path d="M1.200 6L5.500 1.800L9.800 6" stroke="#5a5a5a" stroke-width="1.800" fill="none"/></svg>
<svg style="left:1027px;top:676px" width="11" height="8" viewBox="0 0 11 8"><path d="M1.200 2L5.500 6.200L9.800 2" stroke="#5a5a5a" stroke-width="1.800" fill="none"/></svg>
</body></html>
